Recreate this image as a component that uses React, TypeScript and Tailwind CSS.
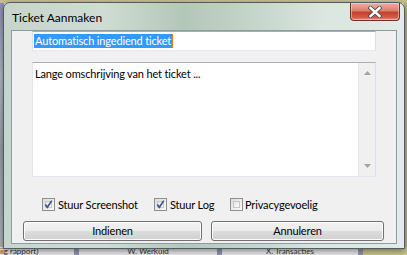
import React from "react";

const font = { fontFamily: 'Lato, "Noto Sans", sans-serif' };

function CheckBox({ checked }: { checked: boolean }) {
  return (
    <div className="relative w-[13px] h-[13px] border border-[#8e8f8f] bg-gradient-to-br from-[#dcdcdc] to-[#fbfbfb] p-[2px] shrink-0">
      <div className="w-full h-full border border-[#c6c6c6] bg-gradient-to-br from-[#e4e4e4] to-[#ffffff]" />
      {checked && (
        <svg viewBox="0 0 13 13" className="absolute left-[-1px] top-[-1px] w-[13px] h-[13px]">
          <path d="M3.3 6.4 L5.4 9.2 L9.8 2.6" fill="none" stroke="#3f5590" strokeWidth="1.7" />
        </svg>
      )}
    </div>
  );
}

function Btn({ label, w }: { label: string; w: string }) {
  return (
    <div
      className={`${w} h-[20px] rounded-[3px] border border-[#707070] flex items-center justify-center text-black bg-[linear-gradient(#f2f2f2_0%,#ebebeb_50%,#dddddd_50%,#cfcfcf_100%)] shadow-[inset_0_0_0_1px_#fcfcfc]`}
    >
      {label}
    </div>
  );
}

export default function App() {
  return (
    <div className="relative w-[407px] h-[255px] overflow-hidden bg-[#a7a9b8]" style={font}>
      {/* desktop background */}
      <div className="flex flex-col w-full h-full">
        <div className="h-[3px] bg-[#c8c08c]" />
        <div className="flex-1 flex">
          <div className="w-[4px] bg-[linear-gradient(#8d90b6,#b6b8c4_30%,#9ea0aa_60%,#b2b4bc)]" />
          <div className="flex-1 bg-[#d6d6d6]" />
          <div className="w-[3px] bg-[#b9b77a]" />
        </div>
        <div className="h-[8px] flex items-start text-[8px] leading-[8px] text-[#333] bg-[#e8e8ea] whitespace-nowrap">
          <div className="w-[74px]">iig rapport)</div>
          <div className="w-[5px] h-full bg-[#8f95b4]" />
          <div className="w-[138px] text-center">W. Werkuid</div>
          <div className="w-[5px] h-full bg-[#8f95b4]" />
          <div className="w-[136px] text-center">X. Transacties</div>
          <div className="w-[5px] h-full bg-[#8f95b4]" />
          <div className="flex-1 h-full bg-[#c9c58a]" />
        </div>
      </div>

      {/* window */}
      <div className="absolute left-[3px] top-[2px] w-[402px] h-[247px] rounded-t-[7px] border border-[#4f5e64] bg-[linear-gradient(90deg,#c6d4cb_0%,#cfdcd3_25%,#b3c7b9_45%,#c2d3c8_60%,#dbe6e0_80%,#e2ebe7_100%)] shadow-[0_2px_6px_rgba(0,0,0,0.45)] flex flex-col">
        {/* title bar */}
        <div className="h-[27px] relative flex items-start">
          <div className="pl-[8px] pt-[7px] text-[12px] leading-[15px] text-black whitespace-nowrap">Ticket Aanmaken</div>
          <div className="absolute left-[346px] top-0 w-[50px] h-[18px] rounded-b-[4px] border border-t-0 border-[#6b3227] bg-[linear-gradient(#eab1a4_0%,#d9806e_45%,#c4412b_55%,#cf5e48_85%,#e29a87_100%)] flex items-center justify-center shadow-[inset_0_0_0_1px_rgba(255,220,210,0.5)]">
            <svg viewBox="0 0 14 12" className="w-[14px] h-[12px]">
              <path d="M2.5 2 L11.5 10 M11.5 2 L2.5 10" stroke="#4a4a4a" strokeWidth="4.2" strokeLinecap="square" />
              <path d="M2.5 2 L11.5 10 M11.5 2 L2.5 10" stroke="#ffffff" strokeWidth="2.4" strokeLinecap="square" />
            </svg>
          </div>
        </div>
        {/* client area */}
        <div className="ml-[7px] w-[386px] h-[214px] border border-[#8c9ca3] bg-[#f0f0f0] flex flex-col text-[11px] tracking-[-0.15px] text-black whitespace-nowrap">
          <div className="ml-[20px] w-[344px] h-[20px] border border-[#abadb3] border-b-[#e3e9ef] border-l-[#e2e3ea] border-r-[#dbdfe6] bg-white flex items-center pl-[1px]">
            <span className="bg-[#3399ff] text-white leading-[14px] px-[1px]">Automatisch ingediend ticket</span>
            <span className="w-[1px] h-[14px] bg-[#e07a20]" />
          </div>
          <div className="ml-[20px] mt-[11px] w-[344px] h-[115px] border border-[#abadb3] border-b-[#e3e9ef] border-l-[#e2e3ea] border-r-[#dbdfe6] bg-white flex">
            <div className="flex-1 pl-[2px] pt-[4px] leading-[14px]">Lange omschrijving van het ticket ...</div>
            <div className="w-[17px] h-full bg-[#f0f0f0] border-l border-[#e6e6e6] flex flex-col items-center justify-between py-[8px]">
              <svg viewBox="0 0 7 4" className="w-[7px] h-[4px]">
                <path d="M0 4 L3.5 0 L7 4 Z" fill="#a3a3a3" />
              </svg>
              <svg viewBox="0 0 7 4" className="w-[7px] h-[4px]">
                <path d="M0 0 L3.5 4 L7 0 Z" fill="#a3a3a3" />
              </svg>
            </div>
          </div>
          <div className="mt-[21px] ml-[30px] h-[13px] flex items-center leading-[13px]">
            <div className="w-[112px] flex items-center gap-[3px]">
              <CheckBox checked />
              <span>Stuur Screenshot</span>
            </div>
            <div className="w-[76px] flex items-center gap-[3px]">
              <CheckBox checked />
              <span>Stuur Log</span>
            </div>
            <div className="flex items-center gap-[2px]">
              <CheckBox checked={false} />
              <span>Privacygevoelig</span>
            </div>
          </div>
          <div className="mt-[10px] ml-[11px] flex gap-[9px]">
            <Btn label="Indienen" w="w-[179px]" />
            <Btn label="Annuleren" w="w-[173px]" />
          </div>
        </div>
      </div>
    </div>
  );
}
